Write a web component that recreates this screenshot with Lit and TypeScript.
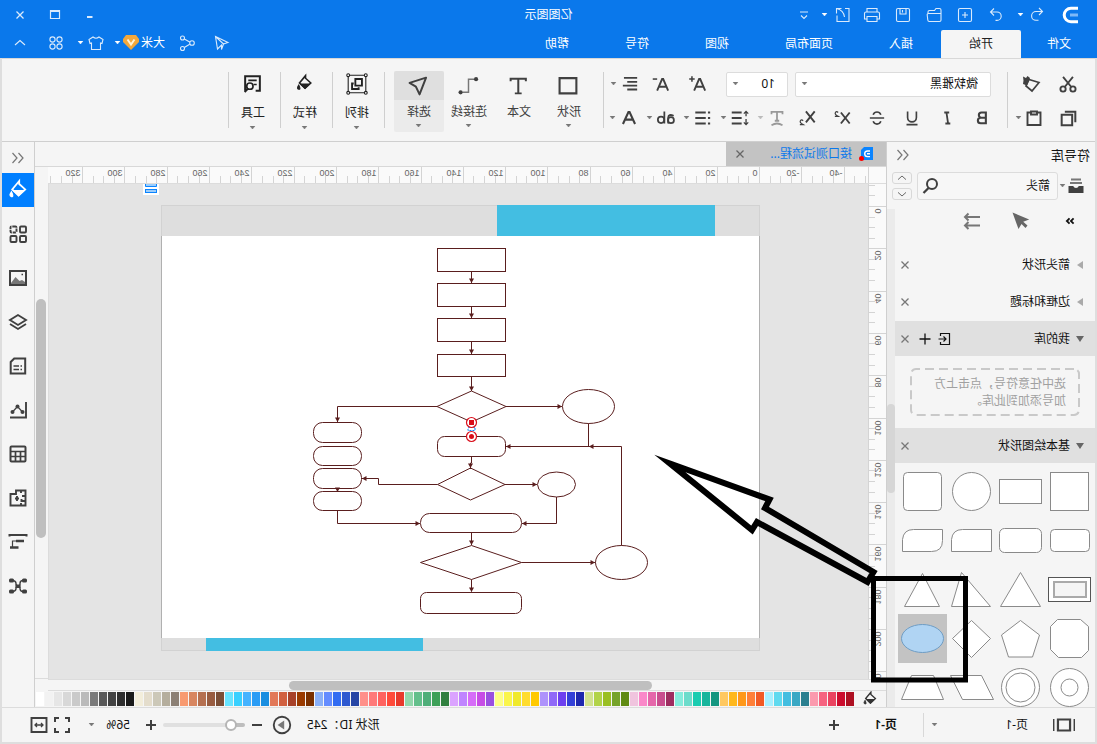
import { LitElement, html, css, svg, nothing } from "lit";
import { customElement, property, state } from "lit/decorators.js";
import { classMap } from "lit/directives/class-map.js";

/* ---------- icon set: every glyph sits on a 20x20 grid ---------- */
const ICONS: Record<string, unknown> = {
  logo: svg`<path d="M3 3.200H10a6.800 6.800 0 0 1 0 13.600H3" fill="none" stroke="#fff" stroke-width="3"/><path d="M3 10h8" stroke="#7db8f7" stroke-width="3"/>`,
  redo: svg`<path d="M12 3.500 15.500 7 12 10.500M15.500 7H9a4.200 4.200 0 0 0 0 8.400h1.500"/>`,
  undo: svg`<path d="M8 3 4.500 6.500 8 10M4.500 6.500H11a4.400 4.400 0 0 1 0 8.800H8.500"/>`,
  plusbox: svg`<rect x="3.500" y="3.500" width="13" height="13" rx="1.500"/><path d="M10 7v6M7 10h6"/>`,
  folder: svg`<path d="M3 15.500v-10.500q0-1.500 1.500-1.500h3.500l1.500 2h5q1.500 0 1.500 1.500v1.500M3 8.500h12.500q1.500 0 1.300 1.500l-.6 5q-.1 1.500-1.500 1.500H4.500q-1.500 0-1.500-1.500z"/>`,
  save: svg`<rect x="3.500" y="3.500" width="13" height="13" rx="1.500"/><path d="M7 3.500v5.500h6V3.500M10.500 5v2.500"/>`,
  print: svg`<path d="M5 7V3.500h10V7M5 14H2.500V8.500q0-1.500 1.500-1.500h12q1.500 0 1.500 1.500V14H15M5 11.500h10v5H5z"/>`,
  exportDoc: svg`<path d="M8 3.500H4v13h12v-6M11.500 3.500h5v5M16.500 3.500Q9.500 5 8.500 12"/>`,
  more: svg`<path d="M6 7h8M7 10.500l3 3 3-3"/>`,
  min: svg`<path d="M7.500 12h5.500" stroke-width="2"/>`,
  max: svg`<path d="M5.500 5.500h9v8h-9z" stroke-width="1.200"/><path d="M5.500 6h9" stroke-width="2"/>`,
  close: svg`<path d="m6.500 6.500 7 7m0-7-7 7" stroke-width="1.300"/>`,
  send: svg`<path d="M4 9.500 16.500 3.500 14.500 16l-4-4v4.500l-2-5.500zM16.500 3.500 8.500 11"/>`,
  share: svg`<circle cx="5" cy="10" r="2.300"/><circle cx="14.500" cy="5" r="2"/><circle cx="14.500" cy="15.500" r="2"/><path d="m7.300 9 5.400-3M7.300 11.200l5.400 3.300"/>`,
  shirt: svg`<path d="M7 4Q10 6.500 13 4l4 2.500-1 4-1.500-.5v6.500h-9V10l-1.500.5-1-4z"/>`,
  apps: svg`<circle cx="6.500" cy="6.500" r="2.600"/><circle cx="13.500" cy="6.500" r="2.600"/><circle cx="6.500" cy="13.500" r="2.600"/><circle cx="13.500" cy="13.500" r="2.600"/>`,
  up: svg`<path d="m5 12 5-4.500 5 4.500"/>`,
  down: svg`<path d="m5 8 5 4.500 5-4.500"/>`,
  cut: svg`<g stroke-width="1.700"><circle cx="5.500" cy="14.500" r="2.400"/><circle cx="14.500" cy="14.500" r="2.400"/><path d="M5.500 3.500 13 12.700M14.500 3.500 7 12.700"/></g>`,
  brush: svg`<path d="M3 8.500 13 5.500l3 6.500-6 5z" stroke-width="1.700"/><path d="m12 4 2.500-2 1.500 2 3-1.500-.5 4 .5 3.500-4 1.500z" fill="currentColor" stroke="none"/>`,
  copy: svg`<path d="M6.500 6.500h10v10h-10zM3.500 13.500v-10h10" stroke-width="1.900"/>`,
  paste: svg`<path d="M7 4.500H3.500v12.500h13V4.500H13M7 3.500h6v3H7z" stroke-width="1.900"/>`,
  bold: svg`<path d="M6.500 5h4a2.300 2.300 0 0 1 0 4.700h-4zM6.500 9.700h4.700a2.500 2.500 0 0 1 0 5.100H6.500z" stroke-width="1.900"/>`,
  italic: svg`<path d="M7.500 5H12M8.500 15H13M9.500 5 11 15" stroke-width="1.600" transform="matrix(-1 0 0 1 20 0)"/>`,
  underline: svg`<path d="M6 4v5.500a4 4 0 0 0 8 0V4M5 16h10" stroke-width="1.500"/>`,
  strike: svg`<path d="M13.500 7Q12.500 4.500 10 4.500T6.500 7M6.500 13q1 2.500 3.500 2.500t3.500-2.500M3.500 10h13" stroke-width="1.500"/>`,
  sup: svg`<path d="m3 5 8 10M11 5l-8 10" stroke-width="1.700"/><path d="M13.500 5q1.500-1.500 2.500 0t-2.500 3.500h3" stroke-width="1.100"/>`,
  sub: svg`<path d="m3 4 8 10M11 4l-8 10" stroke-width="1.700"/><path d="M13.500 12.500q1.500-1.500 2.500 0t-2.500 3.500h3" stroke-width="1.100"/>`,
  textEffect: svg`<path d="M5 6.500V4.500h10v2M10 4.500v8M8 12.500h4M5 16.500q5-3 10 0" stroke-width="1.600"/>`,
  lineHeight: svg`<path d="M8.500 5h9M8.500 10h9M8.500 15h9" stroke-width="1.900"/><path d="M4.500 4v4.500M2.500 6l2-2 2 2M4.500 11v5M2.500 14l2 2 2-2" stroke-width="1.200"/>`,
  list: svg`<path d="M7.500 5h9.500M7.500 10h9.500M7.500 15h9.500M3.500 5h2M3.500 10h2M3.500 15h2" stroke-width="1.900"/>`,
  ab: svg`<g stroke-width="1.600"><circle cx="5.500" cy="12" r="2.700"/><path d="M3 8q4.800-2 5 1.500v5.500M11.500 4v11"/><circle cx="14.500" cy="11.700" r="2.900"/></g>`,
  fontA: svg`<path d="M4.500 15.500 9.500 4.500h1l5 11M6.500 11.500h7" stroke-width="1.900"/>`,
  fontUp: svg`<path d="M3.500 16 8 5.500h1L13.500 16M5.500 12.500h6" stroke-width="1.700"/><path d="M13 5.500h5M15.500 3v5" stroke-width="1.400"/>`,
  fontDown: svg`<path d="M3.500 16 8 5.500h1L13.500 16M5.500 12.500h6" stroke-width="1.700"/><path d="M13.500 5.500h4" stroke-width="1.400"/>`,
  align: svg`<path d="M3.500 4.500h12M3.500 8h9M3.500 11.500h13M3.500 15h9" stroke-width="1.600"/>`,
  rect: svg`<path d="M2.500 3h16v14.500h-16z" stroke-width="2"/>`,
  text: svg`<path d="M3 6V3.500h14.500V6M10.200 3.500v14M7 17.500h6.500" stroke-width="1.900"/>`,
  connector: svg`<path d="M4.500 4H10v12.500h5.500" stroke-width="1.400" stroke="#777"/><circle cx="2.800" cy="4" r="2" fill="currentColor" stroke="none"/><circle cx="17.500" cy="16.500" r="2" fill="currentColor" stroke="none"/>`,
  pointer: svg`<path d="M2.800 2.500 18.500 7.500 12.500 11 9 18.500z" stroke-width="1.900" stroke-linejoin="round"/>`,
  arrange: svg`<path d="M2 2h16v16H2z" stroke-width="1"/><g fill="#f5f5f5" stroke-width="1"><circle cx="2" cy="2" r="1.300"/><circle cx="18" cy="2" r="1.300"/><circle cx="2" cy="18" r="1.300"/><circle cx="18" cy="18" r="1.300"/></g><path d="M5.500 5.500h6v6h-6zM13 9.500h1.500v5h-6v-1.500" stroke-width="1.700"/>`,
  bucket: svg`<path d="M9 2.500 14.800 9.500 9.500 14.500 4 9.500 9 5z" stroke-width="1.500"/><path d="M4 10h11l-5.500 5.500z" fill="currentColor" stroke="none"/><path d="M15.500 11.500q2.300 3.500 0 4t0-4z" fill="currentColor" stroke-width="1"/>`,
  tool: svg`<path d="M7 17H3V3h14v13h-1.500" stroke-width="1.900"/><path d="M6 7h8M6 11h3" stroke-width="1.500"/><circle cx="12.500" cy="12.500" r="3"  stroke-width="1.600"/><path d="m14.500 15 3 3" stroke-width="2"/>`,
  collapse: svg`<path d="m9.500 5-4.500 5 4.500 5M15.500 5 11 10l4.500 5" stroke-width="1.200"/>`,
  drawer: svg`<path d="M5 3.500h10M4 7h12" stroke-width="1.800" stroke="#777"/><path d="M2.500 10h4.700q.8 2 2.800 2t2.800-2h4.700v7h-15z" fill="currentColor" stroke="none"/>`,
  search: svg`<circle cx="9" cy="8" r="5" stroke-width="2"/><path d="m12.500 12 5 5" stroke-width="2.300"/>`,
  back: svg`<path d="m6 7 3 3-3 3M10.500 7l3 3-3 3" stroke-width="2"/>`,
  cursor: svg`<path d="M18.500 1.500 12.500 18l-3-5-4 4-2-2.500 4.300-3.800-6-2.200z" fill="#666" stroke="none"/>`,
  arrows: svg`<path d="M2 6h15M13.500 2.500 17 6l-3.500 3.500M2 14.500h15M13.500 11l3.500 3.500-3.500 3.500" stroke="#777" stroke-width="2"/>`,
  importBox: svg`<path d="M14.500 7V4.500h-9v11h9V13M16.500 10h-7M11.500 7.500 9 10l2.500 2.500" stroke-width="1.200"/>`,
  add: svg`<path d="M10 4.500v11M4.500 10h11" stroke-width="1.300"/>`,
  addBold: svg`<path d="M10 5v10M5 10h10" stroke-width="2"/>`,
  minus: svg`<path d="M5 10h10" stroke-width="2"/>`,
  grid: svg`<g stroke-width="1.900"><rect x="2" y="2.500" width="6" height="6" rx="1"/><rect x="11.500" y="2.500" width="6" height="6" rx="1" stroke-dasharray="3.200 .8"/><rect x="2" y="12" width="6" height="6" rx="1"/><rect x="11.500" y="12" width="6" height="6" rx="1"/></g>`,
  image: svg`<path d="M2 3h16v14H2z" stroke-width="2"/><path d="M3 16v-2l3-2 2.500 1 4-4L17 15v1z" fill="#777" stroke="none"/><path d="M5 6.500h1.500" stroke-width="1.500"/>`,
  layers: svg`<path d="M10 3 18 8l-8 5-8-5zM2 12l8 5 8-5" stroke-width="1.900"/>`,
  doc: svg`<path d="M2.800 2.500h11l3.500 3.500v11.500H2.800z" stroke-width="2"/><path d="M6 10h1.500M6 13.500h1.500M9 10h5.500M9 13.500h5.500" stroke-width="1.600"/>`,
  chart: svg`<path d="M2 2v15.500h16" stroke-width="1.900"/><path d="m5.500 12 5-5.500 5 5.500" stroke-width="1.200"/><g fill="currentColor" stroke="none"><circle cx="5.500" cy="12" r="2"/><circle cx="10.500" cy="6.500" r="2"/><circle cx="15.500" cy="12" r="2"/></g>`,
  table: svg`<rect x="2.500" y="2.500" width="15" height="15" rx="1" stroke-width="2"/><path d="M2.500 7.500h15M2.500 12.500h15M7.500 7.500v10M12.500 7.500v10" stroke-width="1.700"/>`,
  plan: svg`<path d="M2.500 2.500H12V6h5.500v11.500h-15zM2.500 8H6M7 2.500V5M2.500 13h4v-2M7 17.500V15M11 8v5M9 10.500h4" stroke-width="1.900"/>`,
  gantt: svg`<path d="M1.500 4.500V3h17v1.500" stroke-width="2"/><path d="M4 9h8M9.500 15.500H18" stroke-width="2.600"/><path d="M12 9h3.500v6.500" stroke-width="1.200"/>`,
  mind: svg`<path d="M4 4.500h1q3 0 3 3T10 10q2 0 2-2.500t3-3h1M4 15.500h1q3 0 3-3T10 10q2 0 2 2.500t3 3h1" stroke-width="1.400"/><g fill="currentColor" stroke="none"><rect x="1" y="2.500" width="5" height="4" rx="1.500"/><rect x="14" y="2.500" width="5" height="4" rx="1.500"/><rect x="1" y="13.500" width="5" height="4" rx="1.500"/><rect x="14" y="13.500" width="5" height="4" rx="1.500"/><rect x="7.500" y="8.500" width="5" height="3.500"/></g>`,
  pages: svg`<path d="M4.500 5h11v10h-11z" stroke-width="2"/><path d="M.5 4.500v11M19.500 4.500v11" stroke-width="1.600"/>`,
  play: svg`<circle cx="10" cy="10" r="7.500" stroke-width="1.700"/><path d="m8 6 6 4-6 4z" fill="#777" stroke="none"/>`,
  full: svg`<path d="M3 7V3h4M13 3h4v4M17 13v4h-4M7 17H3v-4" stroke-width="2"/>`,
  fit: svg`<path d="M2.500 3h15v14h-15z" stroke-width="1.900"/><path d="M6 10h8M8 8l-2 2 2 2M12 8l2 2-2 2" stroke-width="1.300"/>`,
};

const icon = (name: string, size = 20) => html`<svg
  class="icon" width=${size} height=${size} viewBox="0 0 20 20" fill="none"
  stroke="currentColor" stroke-width="1.1" aria-hidden="true">${ICONS[name]}</svg>`;

const caret = () => html`<svg class="caret" width="7" height="4" viewBox="0 0 7 4" aria-hidden="true"><path d="M1 0h5L3.500 3z" fill="currentColor" stroke="currentColor" stroke-width=".5"/></svg>`;

const shared = css`
  button {
    font: inherit; color: inherit; background: none; border: 0; padding: 0; margin: 0;
    display: flex; align-items: center; justify-content: center; cursor: pointer;
  }
  .icon, .caret { display: block; flex: none; }
  ul, h1, h2, p { list-style: none; margin: 0; padding: 0; font: inherit; }
`;

/* ---------- title bar and menu tabs ---------- */
@customElement("title-bar")
class TitleBar extends LitElement {
  @state() active = "开始";

  static styles = [shared, css`
    :host { display: block; background: #0a78eb; color: #fff; }
    .icon { opacity: .85; }
    .row { display: grid; grid-template-columns: 1fr auto 1fr; height: 30px; align-items: center; }
    .quick, .side { display: flex; align-items: center; height: 100%; }
    .side { justify-content: flex-end; padding-right: 3px; }
    .logo { width: 32px; padding-left: 16px; }
    .logo .icon { opacity: 1; }
    .btn { width: 31px; }
    .narrow { width: 24px; }
    .snug { width: 28px; }
    .drop { width: 9px; height: 20px; }
    .spaced { margin-left: 4px; }
    .wide { width: 35px; }
    .apps { width: 37px; }
    .menu { display: flex; justify-content: space-between; height: 28px; }
    .tabs { display: flex; }
    .tab { padding: 0 28px; }
    .tab:first-child { padding: 0 26px; }
    .tab.active { background: #f5f5f5; color: #222; border-radius: 2px 2px 0 0; }
    .side.low { padding-bottom: 3px; box-sizing: border-box; }
    .user { gap: 2px; padding: 0 5px 0 4px; }
    .shirt { width: 34px; gap: 2px; }
  `];

  render() {
    const tabs = ["文件", "开始", "插入", "页面布局", "视图", "符号", "帮助"];
    return html`
      <div class="row">
        <div class="quick">
          <div class="logo">${icon("logo")}</div>
          <button class="narrow" aria-label="撤销">${icon("undo")}</button>
          <button class="drop" aria-label="撤销列表">${caret()}</button>
          <button class="btn spaced" aria-label="重做">${icon("redo")}</button>
          <button class="btn" aria-label="新建">${icon("plusbox")}</button>
          <button class="btn" aria-label="打开">${icon("folder")}</button>
          <button class="btn" aria-label="保存">${icon("save")}</button>
          <button class="btn" aria-label="打印">${icon("print")}</button>
          <button class="snug" aria-label="导出">${icon("exportDoc")}</button>
          <button class="drop" aria-label="导出列表">${caret()}</button>
          <button class="btn" aria-label="更多">${icon("more")}</button>
        </div>
        <h1>亿图图示</h1>
        <div class="side">
          <button class="wide" aria-label="最小化">${icon("min")}</button>
          <button class="wide" aria-label="最大化">${icon("max")}</button>
          <button class="wide" aria-label="关闭">${icon("close")}</button>
        </div>
      </div>
      <div class="menu">
        <nav class="tabs">
          ${tabs.map((t) => html`<button class=${classMap({ tab: true, active: t === this.active })}
            @click=${() => (this.active = t)}>${t}</button>`)}
        </nav>
        <div class="side low">
          <button class="wide" aria-label="发送">${icon("send")}</button>
          <button class="wide" aria-label="分享">${icon("share")}</button>
          <button class="user">大米
            <svg width="16" height="15" viewBox="0 0 16 15" aria-hidden="true">
              <path d="M3 0h10l3 4v3l-8 8-8-8V4z" fill="#f3a83c"/>
              <path d="m4.500 4.500 3.500 5 3.500-5" fill="none" stroke="#fff3d8" stroke-width="2"/>
            </svg>${caret()}</button>
          <button class="shirt" aria-label="皮肤">${icon("shirt")}${caret()}</button>
          <button class="apps" aria-label="应用">${icon("apps")}</button>
          <button class="wide" aria-label="收起功能区">${icon("up")}</button>
        </div>
      </div>`;
  }
}

/* ---------- ribbon ---------- */
@customElement("tool-ribbon")
class ToolRibbon extends LitElement {
  static styles = [shared, css`
    :host {
      display: flex; height: 84px; color: #404040; background: #f5f5f5;
      border-top: 1px solid #d8d8d8; border-bottom: 1px solid #cfcfcf;
      box-sizing: border-box;
    }
    .caret { color: #777; }
    .sep { width: 1px; height: 56px; margin-top: 13px; background: #cfcfcf; }
    .group { padding-top: 8px; }
    .line { display: flex; align-items: center; height: 34px; }
    .clip { padding-left: 9px; width: 78px; }
    .font { padding-left: 7px; width: 396px; }
    .cell { width: 35px; height: 30px; }
    .split { width: 37px; height: 30px; justify-content: flex-start; gap: 2px; padding-left: 2px; box-sizing: border-box; }
    .split.clipboard { width: 42px; padding-left: 7px; }
    .plain { width: 37px; height: 30px; }
    .muted { color: #999; }
    .muted .caret { color: #bbb; }
    .field { position: relative; display: flex; align-items: center; }
    .field .caret { position: absolute; right: 6px; pointer-events: none; }
    select {
      appearance: none; font: inherit; color: #111; background: #fff; border: 1px solid #dcdcdc;
      border-radius: 2px; height: 25px; margin: 0; width: 100%; padding: 0 0 0 12px;
    }
    .family { width: 196px; margin-left: 9px; }
    .size { width: 62px; margin: 0 9px 0 7px; }
    .big { display: flex; padding: 12px 9px 0 9px; }
    .tool { width: 50px; height: 61px; flex-direction: column; justify-content: flex-start; border-radius: 2px; overflow: hidden; }
    .tool .pic { width: 100%; height: 29px; display: flex; align-items: center; justify-content: center; }
    .tool .name { height: 24px; line-height: 24px; white-space: nowrap; }
    .tool.on { background: #ebebeb; }
    .tool.on .pic { background: #dfdfdf; }
    .menu { width: 49px; padding: 10px 0 0 2px; color: #222; }
    .menu .tool { height: 65px; }
    .menu .name { height: 28px; line-height: 30px; }
  `];

  private split(name: string, label: string, cls = "") {
    return html`<button class="split ${cls}" aria-label=${label}>${icon(name, 22)}${caret()}</button>`;
  }

  render() {
    const styles: [string, string][] = [["bold", "加粗"], ["italic", "斜体"], ["underline", "下划线"], ["strike", "删除线"], ["sup", "上标"], ["sub", "下标"]];
    const big: [string, string, boolean][] = [["rect", "形状", true], ["text", "文本", false], ["connector", "连接线", true], ["pointer", "选择", true]];
    const menus: [string, string][] = [["arrange", "排列"], ["bucket", "样式"], ["tool", "工具"]];
    return html`
      <div class="group clip">
        <div class="line">
          <button class="cell" aria-label="剪切">${icon("cut", 22)}</button>
          <button class="plain" aria-label="格式刷">${icon("brush")}</button>
        </div>
        <div class="line">
          <button class="cell" aria-label="复制">${icon("copy", 21)}</button>
          <button class="split clipboard" aria-label="粘贴">${icon("paste")}${caret()}</button>
        </div>
      </div>
      <div class="sep"></div>
      <div class="group font">
        <div class="line">
          <div class="field family">
            <select aria-label="字体"><option>微软雅黑</option></select>${caret()}
          </div>
          <div class="field size">
            <select aria-label="字号"><option>10</option></select>${caret()}
          </div>
          <button class="plain" aria-label="增大字号">${icon("fontUp", 22)}</button>
          <button class="plain" aria-label="减小字号">${icon("fontDown", 22)}</button>
          ${this.split("align", "对齐")}
        </div>
        <div class="line">
          ${styles.map(([n, l]) => html`<button class="cell" aria-label=${l}>${icon(n, 22)}</button>`)}
          ${this.split("textEffect", "文字效果", "muted")}
          ${this.split("lineHeight", "行距")}
          ${this.split("list", "项目符号")}
          ${this.split("ab", "大小写")}
          ${this.split("fontA", "字体颜色")}
        </div>
      </div>
      <div class="sep"></div>
      <div class="big">
        ${big.map(([n, l, drop]) => html`<button class=${classMap({ tool: true, on: l === "选择" })}>
          <span class="pic">${icon(n, 21)}</span><span class="name">${l}</span>${drop ? caret() : nothing}</button>`)}
      </div>
      ${menus.map(([n, l]) => html`<div class="sep"></div><div class="menu">
        <button class="tool"><span class="pic">${icon(n, n === "arrange" ? 22 : 21)}</span><span class="name">${l}</span>${caret()}</button></div>`)}
      <div class="sep"></div>`;
  }
}

/* ---------- symbol library ---------- */
const SHAPES: unknown[] = [
  svg`<rect x="5.500" y="5.500" width="38" height="38"/>`,
  svg`<rect x="3.500" y="12.500" width="42" height="24"/>`,
  svg`<circle cx="24.500" cy="24.500" r="19"/>`,
  svg`<rect x="5.500" y="5.500" width="38" height="38" rx="4"/>`,
  svg`<rect x="4.500" y="13.500" width="39" height="22" rx="4"/>`,
  svg`<rect x="3.500" y="12.500" width="42" height="24" rx="5"/>`,
  svg`<path d="M4.500 13.500h29q10 0 11 10v12h-40z"/>`,
  svg`<path d="M4.500 13.500h29q10 0 11 10v12h-29q-11 0-11-11z"/>`,
  svg`<rect x="3.500" y="12.500" width="42" height="24" stroke="#555"/><rect x="8" y="17" width="32" height="15" fill="#f5f5f5" stroke="#aaa" stroke-width="2"/>`,
  svg`<path d="M24.500 7.500 44.500 41.500h-40z"/>`,
  svg`<path d="M34.500 7.500 44.500 41.500h-39z"/>`,
  svg`<path d="M24.500 8.500 42.500 41.500h-35z"/>`,
  svg`<path d="M13.500 5.500h23l7 7v23l-8 8h-23l-7-7v-24z"/>`,
  svg`<path d="m24.500 6.500 19 14.500-7 22h-24l-7-22z"/>`,
  svg`<path d="m24.500 6.500 19 18-19 19-19-19z"/>`,
  svg`<ellipse cx="24.500" cy="24.500" rx="21" ry="14" fill="#b0d4f3" stroke="#6f9dc4"/>`,
  svg`<circle cx="24.500" cy="24.500" r="19"/><circle cx="24.500" cy="24.500" r="8.500"/>`,
  svg`<circle cx="24.500" cy="24.500" r="19"/><circle cx="24.500" cy="24.500" r="14.500"/>`,
  svg`<path d="M14.500 12.500h31l-12 24h-31z"/>`,
  svg`<path d="M13.500 12.500h22l10 24h-42z"/>`,
];

@customElement("symbol-library")
class SymbolLibrary extends LitElement {
  static styles = [shared, css`
    :host { display: flex; flex-direction: column; width: 208px; background: #f5f5f5; color: #111; border-right: 1px solid #cfcfcf; overflow: hidden; }
    .head { display: flex; justify-content: space-between; align-items: center; height: 25px; padding: 0 6px 0 5px; font-size: 13px; }
    .head button, .x { color: #777; }
    .find { display: flex; align-items: center; height: 28px; padding: 5px 0 0 9px; }
    .cats { width: 28px; justify-content: flex-start; color: #404040; }
    .caret { color: #777; }
    .box { display: flex; align-items: center; width: 139px; height: 26px; border: 1px solid #dcdcdc; border-radius: 3px; background: #f7f7f7; }
    input { flex: 1; min-width: 0; border: 0; outline: 0; background: none; font: inherit; color: #111; padding: 0 0 0 7px; }
    .box button { width: 26px; color: #404040; }
    .steps { display: flex; flex-direction: column; gap: 4px; margin-left: 5px; }
    .steps button { width: 20px; height: 12px; border: 1px solid #d8d8d8; border-radius: 3px; box-sizing: border-box; color: #555; overflow: hidden; }
    .scroller { display: flex; flex: 1; min-height: 0; margin-top: 9px; }
    .list { width: 200px; overflow: hidden; flex: none; }
    .track { flex: 1; background: #ebebeb; padding-top: 195px; }
    .thumb { height: 89px; background: #d6d6d6; border-radius: 4px; }
    .marks { display: flex; height: 37px; align-items: flex-start; }
    .marks button { width: 49px; height: 24px; }
    .sect { display: flex; align-items: center; height: 37px; padding: 0 0 0 10px; }
    .sect.open { height: 35px; background: #e0e0e0; }
    .sect.open.first { margin-top: 1px; }
    .sect h2 { flex: 1; margin-left: 5px; }
    .sect button { width: 20px; height: 20px; }
    .tri { width: 10px; display: block; color: #aaa; }
    .open .tri { color: #666; }
    .hint { margin: 12px 15px; height: 48px; box-sizing: border-box; position: relative; padding: 7px 14px; line-height: 17px; color: #a0a0a0; }
    .dash { position: absolute; inset: 0; width: 100%; height: 100%; }
    .shapes { display: grid; grid-template-columns: repeat(4, 49px); padding: 4px 0 0 1px; }
    .shapes .sel { background: #c3c3c3; background-clip: content-box; }
    .shapes svg { display: block; }
  `];

  private section(title: string, open: boolean, extra = false) {
    return html`<div class="sect ${open ? "open" : ""} ${extra ? "first" : ""}">
      <svg class="tri" height="10" viewBox="0 0 10 10" aria-hidden="true"><path d=${open ? "M1 2h8L5 8z" : "M2 1v8l6-4z"} fill="currentColor"/></svg>
      <h2>${title}</h2>
      ${extra ? html`<button aria-label="导入">${icon("importBox")}</button><button aria-label="添加">${icon("add")}</button>` : nothing}
      <button class="x" aria-label="关闭">${icon("close")}</button>
    </div>`;
  }

  render() {
    return html`
      <div class="head"><span>符号库</span><button aria-label="折叠">${icon("collapse")}</button></div>
      <div class="find">
        <button class="cats" aria-label="分类">${icon("drawer")}${caret()}</button>
        <div class="box"><input type="text" aria-label="搜索符号" .value=${"箭头"}><button aria-label="搜索">${icon("search")}</button></div>
        <div class="steps"><button aria-label="上一个">${icon("up", 16)}</button><button aria-label="下一个">${icon("down", 16)}</button></div>
      </div>
      <div class="scroller">
        <div class="list">
          <div class="marks">
            <button aria-label="返回">${icon("back", 18)}</button>
            <button aria-label="选择箭头">${icon("cursor")}</button>
            <button aria-label="双箭头">${icon("arrows")}</button>
          </div>
          ${this.section("箭头形状", false)}
          ${this.section("边框和标题", false)}
          ${this.section("我的库", true, true)}
          <p class="hint"><svg class="dash" aria-hidden="true"><rect x="1" y="1" width="168" height="46" rx="5" fill="none" stroke="#c9c9c9" stroke-width="2" stroke-dasharray="9 5"/></svg>选中任意符号，点击上方加号添加到此库。</p>
          ${this.section("基本绘图形状", true)}
          <div class="shapes">
            ${SHAPES.map((s, i) => html`<button class=${classMap({ sel: i === 15 })} aria-label="形状 ${i + 1}">
              <svg width="49" height="49" viewBox="0 0 49 49" fill="#fff" stroke="#8a8a8a">${s}</svg></button>`)}
          </div>
        </div>
        <div class="track"><div class="thumb"></div></div>
      </div>`;
  }
}

/* ---------- drawing area ---------- */
const SWATCHES = (
  "ae1022 cc0c2d ea4360 f66380 fb9aae 2a7f8f 3aa8c4 43bee0 60daef a8f0ff f15a24 ff7f38 ff981a ffb81c ffc860 " +
  "149680 18b59c 1accb0 6cdccb 86ecdc 9e2d60 c94d8e e566aa fa88c9 f0c4de 5f8a12 76a32a 9abf23 b2d349 d2e28f " +
  "1e28ae 3340d8 6d40f0 9069f8 ae92fb ffc900 ffdc2e f0e92b faf54b fdff87 9a50e0 c74ce6 d66cf8 c084ff dba3ff " +
  "31803f 3ea058 4fae79 63bf8b 92d7ab e8392b ff4a3a ff6360 ff7a7a ff908a 2645a5 2e59d0 326cf2 648cff 8ab0f8 " +
  "7a3000 9a3a00 a8422a d16040 e27858 1a8ee0 2a9cf5 45b3ff 38d0ff 68e4ff 7a4e36 985c40 b57050 d88660 f89a70 " +
  "8c8075 b5ae9d ccc8b8 e4ddcc f3eedb 1a1a1a 2e2e2e 434343 595959 7a7a7a bababa cacaca d8d8d8 e6e6e6 f2f2f2 ffffff"
).split(" ");

const UNIT = 42.3; // pixels per 20 ruler units

@customElement("drawing-area")
class DrawingArea extends LitElement {
  static styles = [shared, css`
    :host { display: grid; flex: 1; min-width: 0; grid-template-rows: 25px 17px minmax(0, 1fr) 12px 16px; background: #f5f5f5; }
    .tabs { display: flex; border-bottom: 1px solid #d8d8d8; }
    .tab { display: flex; align-items: center; width: 160px; background: #c3c3c3; color: #0a78eb; }
    .tab span { flex: 1; white-space: nowrap; margin-left: 7px; }
    .tab .doc { margin-left: 13px; }
    .tab button { width: 28px; color: #666; }
    .rule { display: flex; padding-left: 17px; overflow: hidden; border-bottom: 1px solid #dcdcdc; margin-right: 13px; background: #fafafa; }
    .mid { display: grid; grid-template-columns: 18px minmax(0, 1fr) 13px; min-height: 0; }
    .vr { background: #fafafa; overflow: hidden; }
    .board { position: relative; overflow: hidden; background: #e4e4e4; border-right: 1px solid #dcdcdc; }
    .board svg { position: absolute; left: 0; top: 0; }
    svg { display: block; flex: none; }
    text { font: 9px "Liberation Sans", sans-serif; fill: #666; stroke: none; }
    .vbar { padding: 115px 1px 0 2px; border-bottom: 1px solid #dcdcdc; }
    .vthumb { height: 239px; background: #bfbfbf; border-radius: 5px; }
    .hbar { border-top: 1px solid #dcdcdc; border-bottom: 1px solid #dcdcdc; padding-left: 234px; margin-right: 13px; }
    .hthumb { height: 9px; width: 363px; background: #bfbfbf; border-radius: 5px; margin-top: 1px; }
    .colors { display: flex; align-items: center; padding-left: 7px; color: #333; overflow: hidden; }
    .colors ul { display: flex; gap: 1px; margin-left: 7px; }
    .colors li { width: 8px; height: 14px; }
  `];

  private horizontal() {
    const out = [];
    for (let i = -12; i < 84; i++) {
      const x = Math.round(109 + (i * UNIT) / 4) + 0.5;
      const major = i % 4 === 0;
      if (x < 2 || x > 822) continue;
      out.push(svg`<path d="M${x} ${major ? 0 : 9}V16"/>`);
      if (major && x < 800) out.push(svg`<text x=${x + 2} y="9">${i * 5}</text>`);
    }
    return out;
  }

  private vertical() {
    const out = [];
    for (let i = -2; i < 48; i++) {
      const y = Math.round(22 + (i * UNIT) / 4) + 0.5;
      const major = i % 4 === 0;
      out.push(svg`<path d="M${major ? 0 : 11} ${y}H18"/>`);
      if (major && y < 500) out.push(svg`<text text-anchor="end" transform="translate(11 ${y + 2}) rotate(-90)">${i * 5}</text>`);
    }
    return out;
  }

  /* Flowchart, in window coordinates shifted by the viewBox */
  private chart() {
    const head = (x: number, y: number, dir: "d" | "l" | "r") => {
      const d = dir === "d" ? "l-2.500-4.500h5z" : dir === "l" ? "l4.500-2.500v5z" : "l-4.500-2.500v5z";
      return svg`<path d="M${x} ${y}${d}" fill="#5a1e1e" stroke="none"/>`;
    };
    return svg`
      <g stroke="none">
        <rect x="337.500" y="205.500" width="598" height="445" fill="#dedede" stroke="#d2d2d2"/>
        <rect x="337" y="236" width="598" height="402" fill="#fff"/>
        <path d="M337.500 236v402M935.500 236v402" stroke="#b0b0b0"/>
        <rect x="382" y="205" width="218" height="31" fill="#43bee2"/>
        <rect x="674" y="638" width="217" height="13" fill="#43bee2"/>
        <rect x="938" y="184" width="16" height="11" fill="#fff"/>
        <g fill="#9ccdfb" stroke="#0a84ff"><path d="M940.500 184v2.500h11V184"/><rect x="940.500" y="189.500" width="11" height="3"/></g>
      </g>
      <g fill="none" stroke="#5a1e1e">
        <rect x="591.500" y="248.500" width="68" height="23"/>
        <rect x="591.500" y="283.500" width="68" height="23"/>
        <rect x="591.500" y="318.500" width="68" height="23"/>
        <rect x="591.500" y="354.500" width="68" height="22"/>
        <path d="M625.500 271.500v12M625.500 306.500v12M625.500 341.500v13M625.500 377v14"/>
        <path d="M591 406.500 625.500 391l34.500 15.500L625.500 422z"/>
        <ellipse cx="508.500" cy="406.500" rx="26" ry="17"/>
        <path d="M591 406.500h-56M660 406.500h99.500V422"/>
        <rect x="591.500" y="436.500" width="68" height="20" rx="7"/>
        <path d="M508.500 423.500v23M475.500 545.500v-99H591"/>
        <path d="M625.500 457v6h1v6M592 484.500l34.500-16.500 33 16.500L626.500 500z"/>
        <ellipse cx="540.500" cy="484.500" rx="19" ry="12.500"/>
        <path d="M592 484.500h-32M540.500 497v26.500H575M659.500 484.500h59v-6H735"/>
        <rect x="575.500" y="513.500" width="101" height="19" rx="9"/>
        <path d="M625.500 532.500V545M759.500 511v12.500H677"/>
        <path d="M575.500 562.500 625.500 545.500l51 17-51 17z"/>
        <ellipse cx="475.500" cy="562.500" rx="26" ry="17"/>
        <path d="M575.500 562.500h-74M625.500 579.500v12"/>
        <rect x="575.500" y="592.500" width="101" height="21" rx="6"/>
        <rect x="735.500" y="422.500" width="48" height="20" rx="9"/>
        <rect x="735.500" y="446.500" width="48" height="19" rx="9"/>
        <rect x="735.500" y="468.500" width="48" height="20" rx="9"/>
        <rect x="735.500" y="491.500" width="48" height="19" rx="9"/>
        <path d="M759.500 489v3"/>
      </g>
      ${[283, 318, 354, 391, 545, 592].map((y) => head(625.5, y, "d"))}
      ${head(626.5, 468, "d")}${head(759.5, 422, "d")}${head(759.5, 492, "d")}
      ${head(535, 406.5, "l")}${head(560, 484.5, "l")}${head(502, 562.5, "l")}${head(677, 523.5, "l")}
      ${head(591, 446.5, "r")}${head(508, 446.5, "r")}${head(575, 523.5, "r")}${head(735, 478.5, "r")}
      <path d="m622 428 3.500-2 3.500 2v2.500h-7z" fill="#fff" stroke="#0a84ff" stroke-dasharray="2 1"/>
      <g fill="#fff" stroke="#d90d1a" stroke-width="1.200"><circle cx="625.500" cy="422.500" r="5"/><circle cx="625.500" cy="436.500" r="5"/></g>
      <rect x="623" y="420" width="5" height="5" fill="#d90d1a"/><circle cx="625.500" cy="436.500" r="2.500" fill="#d90d1a"/>`;
  }

  render() {
    return html`
      <div class="tabs"><div class="tab">
        <svg class="doc" width="14" height="14" viewBox="0 0 14 14" aria-hidden="true">
          <path d="M0 0h9l3 3v10H0z" fill="#0a84ff"/><path d="M3 4h2.500a2.800 2.800 0 0 1 0 5.600H3M3 6.800h3" fill="none" stroke="#fff" stroke-width="1.400"/><circle cx="11.500" cy="11.500" r="2.500" fill="#f00"/>
        </svg>
        <span>接口测试流程...</span><button aria-label="关闭标签">${icon("close")}</button>
      </div></div>
      <div class="rule"><svg width="2400" height="16" stroke="#d4d4d4"><path d="M.5 0v16"/>${this.horizontal()}</svg></div>
      <div class="mid">
        <div class="vr"><svg width="18" height="1400" stroke="#d4d4d4"><path d="M17.500 0v1400"/>${this.vertical()}</svg></div>
        <div class="board"><svg width="820" height="494" viewBox="229 184 820 494">${this.chart()}</svg></div>
        <div class="vbar"><div class="vthumb"></div></div>
      </div>
      <div class="hbar"><div class="hthumb"></div></div>
      <div class="colors">${icon("bucket", 18)}
        <ul>${SWATCHES.map((c) => html`<li style="background:#${c}"></li>`)}</ul>
      </div>`;
  }
}

/* ---------- property rail ---------- */
@customElement("side-rail")
class SideRail extends LitElement {
  static styles = [shared, css`
    :host { display: flex; flex-direction: column; width: 32px; background: #f5f5f5; border-left: 1px solid #cfcfcf; color: #404040; }
    .fold { height: 31px; color: #777; }
    .item { height: 34px; margin-bottom: 10px; }
    .item.on { background: #007fff; color: #fff; }
  `];
  render() {
    const items: [string, string][] = [["bucket", "填充"], ["grid", "符号"], ["image", "图片"], ["layers", "图层"], ["doc", "文档"], ["chart", "图表"], ["table", "表格"], ["plan", "平面图"], ["gantt", "甘特图"], ["mind", "思维导图"]];
    return html`<button class="fold" aria-label="展开">${icon("collapse")}</button>
      ${items.map(([n, l], i) => html`<button class=${classMap({ item: true, on: i === 0 })} aria-label=${l}>${icon(n, i === 0 ? 24 : 20)}</button>`)}`;
  }
}

/* ---------- status bar ---------- */
@customElement("status-bar")
class StatusBar extends LitElement {
  @property({ type: Number }) zoom = 56;
  static styles = [shared, css`
    :host { display: flex; align-items: center; justify-content: space-between; height: 34px; padding-left: 20px; padding-right: 27px; border-top: 1px solid #dcdcdc; background: #f5f5f5; color: #111; }
    .pages, .view { display: flex; align-items: center; }
    .icon { color: #404040; }
    .caret { color: #777; }
    .page { margin-left: 25px; width: 84px; justify-content: flex-start; }
    .drop { width: 19px; height: 20px; }
    .sep { width: 1px; height: 24px; background: #d8d8d8; margin-left: 1px; }
    .current { margin: 0 30px 0 26px; font-weight: 600; }
    .target { margin: 0 4px 0 14px; }
    input { appearance: none; width: 82px; height: 16px; margin: 0 2px; background: none; }
    input::-webkit-slider-runnable-track { height: 4px; border-radius: 2px; background: linear-gradient(to right, #bdbdbd 16%, #e0e0e0 16%); }
    input::-webkit-slider-thumb { appearance: none; width: 12px; height: 12px; margin-top: -4px; border-radius: 50%; background: #fff; border: 2px solid #b5b5b5; box-sizing: border-box; }
    output { margin-left: 11px; width: 29px; }
    .last { margin: 0 3px 0 10px; }
  `];
  render() {
    return html`
      <div class="pages">
        <button aria-label="页面列表">${icon("pages", 22)}</button>
        <button class="page">页-1</button>
        <button class="drop" aria-label="选择页面">${caret()}</button>
        <div class="sep"></div>
        <button class="current">页-1</button>
        <button aria-label="添加页面">${icon("addBold")}</button>
      </div>
      <div class="view">
        <span>形状 ID：245</span>
        <button class="target" aria-label="演示">${icon("play", 22)}</button>
        <button aria-label="缩小">${icon("minus")}</button>
        <input type="range" aria-label="缩放" min="10" max="400" value=${this.zoom}>
        <button aria-label="放大">${icon("addBold")}</button>
        <output>${this.zoom}%</output>
        <button class="drop" aria-label="缩放列表">${caret()}</button>
        <button class="last" aria-label="全屏">${icon("full")}</button>
        <button aria-label="适合宽度">${icon("fit")}</button>
      </div>`;
  }
}

/* ---------- window ---------- */
@customElement("app-root")
class AppRoot extends LitElement {
  static styles = css`
    :host { display: block; overflow: hidden; }
    .window {
      position: relative; display: flex; flex-direction: column; height: 100vh;
      font: 12px/16px "Noto Sans", "Noto Sans CJK SC", sans-serif;
      transform: scaleX(-1); background: #dedede;
    }
    .frame { flex: 1; min-height: 0; display: flex; flex-direction: column; padding: 0 2px 2px; }
    .body { flex: 1; min-height: 0; display: flex; }
    .callout { position: absolute; left: 0; top: 0; pointer-events: none; }
  `;
  render() {
    return html`<div class="window">
      <title-bar></title-bar>
      <div class="frame">
        <tool-ribbon></tool-ribbon>
        <main class="body">
          <symbol-library></symbol-library>
          <drawing-area></drawing-area>
          <side-rail></side-rail>
        </main>
        <status-bar></status-bar>
      </div>
      <svg class="callout" width="460" height="700" fill="none" stroke="#000" stroke-width="5" stroke-miterlimit="12" aria-hidden="true">
        <rect x="131.500" y="578.500" width="92" height="101.500"/>
        <path d="M427 463.500 327.500 499.500 332 508 223.500 572 229.500 582 340 522 345 530z" stroke-width="6"/>
      </svg>
    </div>`;
  }
}
